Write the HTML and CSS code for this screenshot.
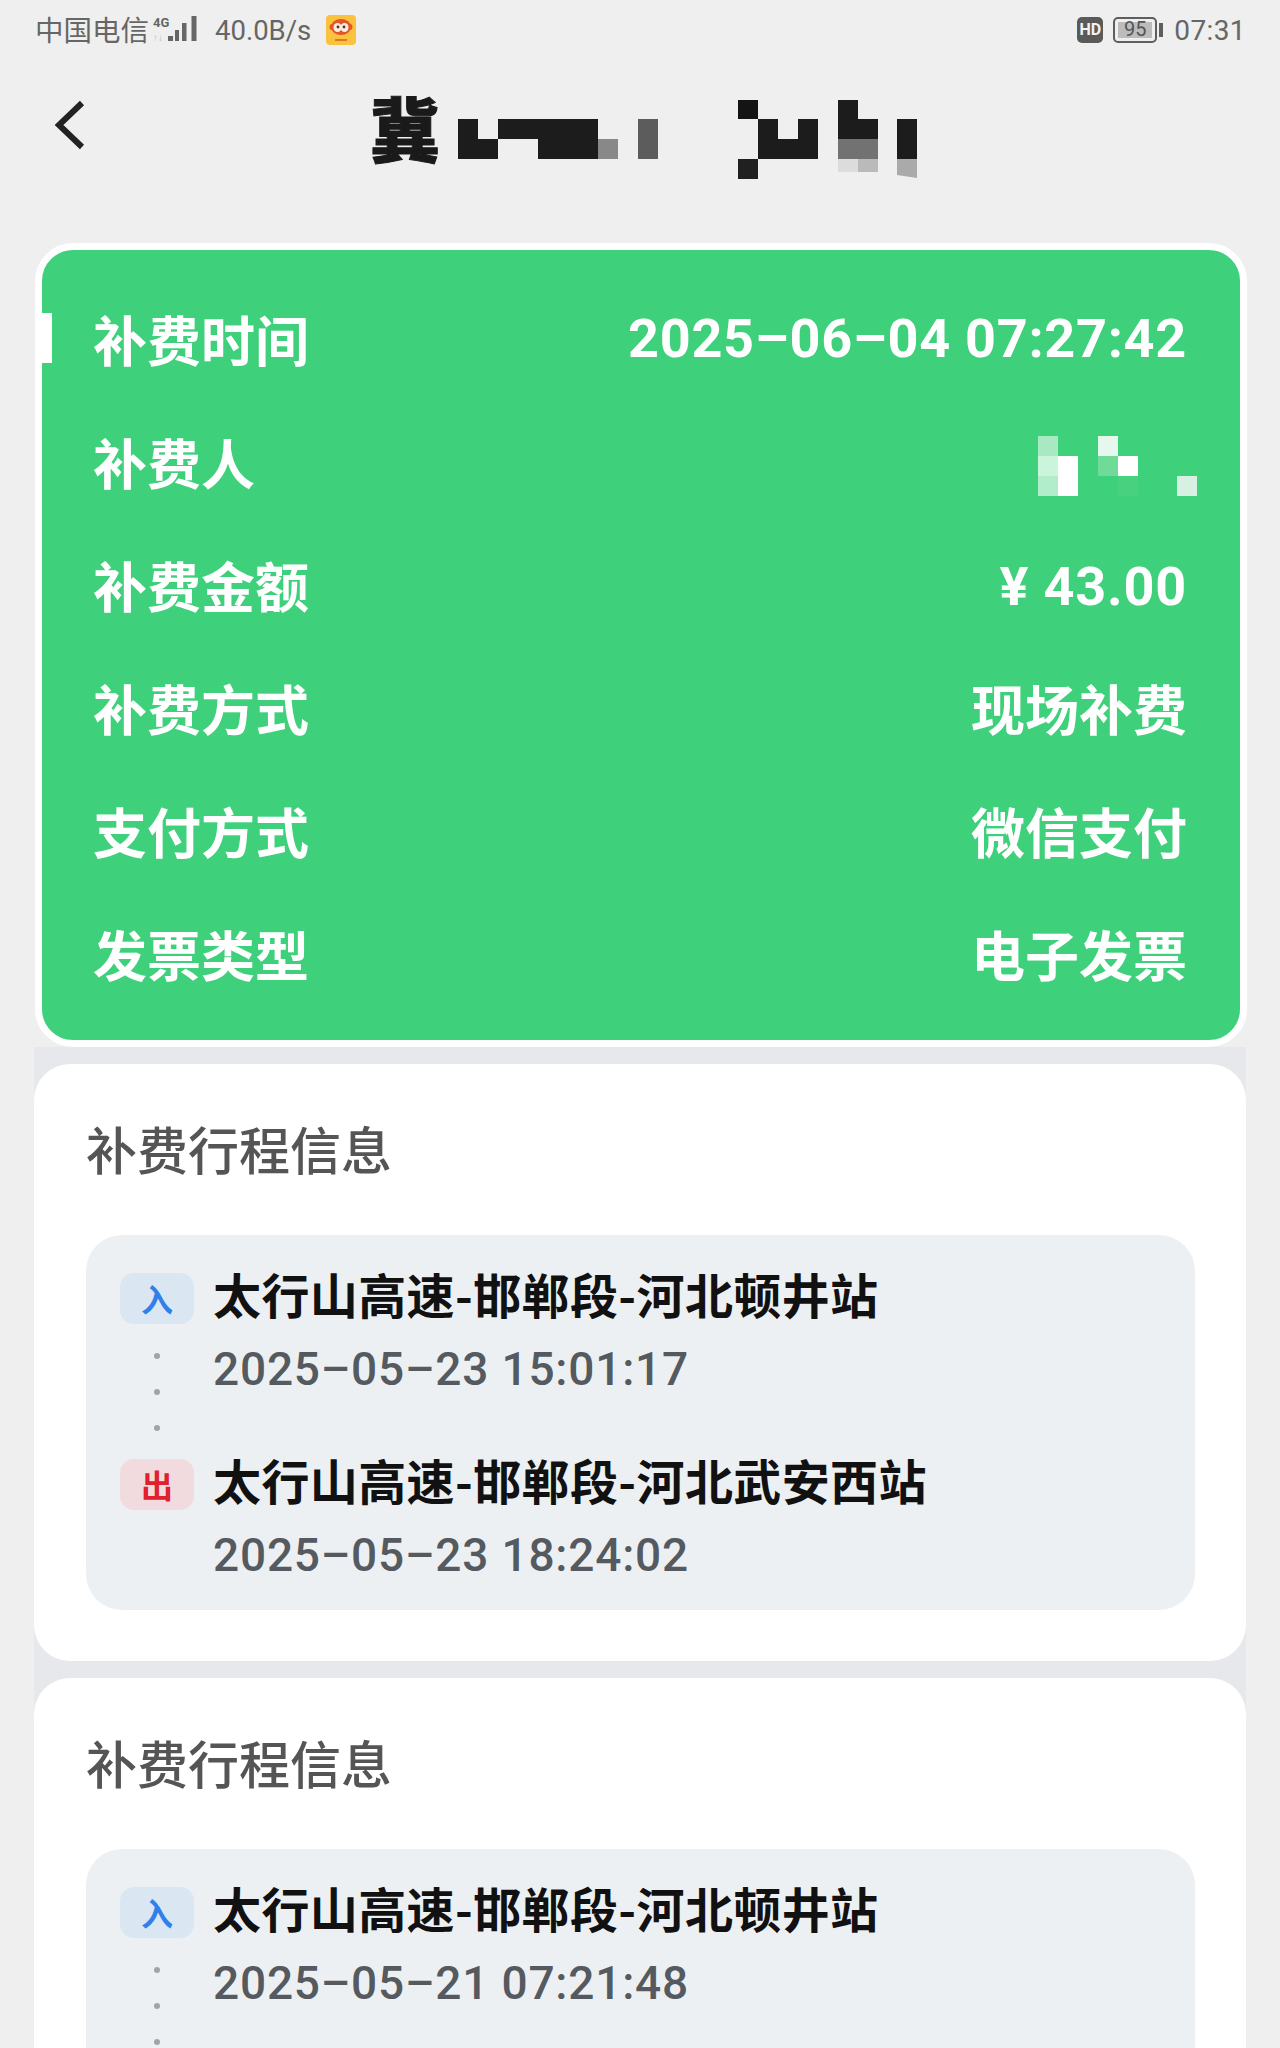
FILE: index.html
```html
<!DOCTYPE html>
<html lang="zh-CN">
<head>
<meta charset="utf-8">
<title>补费详情</title>
<link rel="stylesheet" href="styles.css">
</head>
<body>
<div class="page">
  <header class="status">
    <div class="status-left">
      <span class="carrier">中国电信</span>
      <svg class="signal" width="45" height="30" viewBox="0 0 45 30">
        <text x="1" y="12" class="sig-4g">4G</text>
        <text x="1" y="26" class="sig-arrows">↑↓</text>
        <rect x="16" y="21" width="5" height="5" fill="#666"/>
        <rect x="23" y="15" width="4" height="11" fill="#666"/>
        <rect x="30" y="8" width="4.500" height="18" fill="#666"/>
        <rect x="39.500" y="1" width="5" height="25" fill="#666"/>
      </svg>
      <span class="speed">40.0B/s</span>
      <svg class="app" width="30" height="30" viewBox="0 0 30 30">
        <rect width="30" height="30" rx="4" fill="#fbc23e"/>
        <ellipse cx="15" cy="12" rx="10" ry="8" fill="#e2562c"/>
        <ellipse cx="6" cy="12" rx="2.5" ry="3" fill="#e2562c"/>
        <ellipse cx="24" cy="12" rx="2.5" ry="3" fill="#e2562c"/>
        <ellipse cx="11.500" cy="12.500" rx="4" ry="4.500" fill="#fbeede"/>
        <ellipse cx="18.500" cy="12.500" rx="4" ry="4.500" fill="#fbeede"/>
        <circle cx="12" cy="12" r="1.400" fill="#532"/>
        <circle cx="18" cy="12" r="1.400" fill="#532"/>
        <rect x="9" y="24" width="12" height="2" fill="#d97a2a"/>
      </svg>
    </div>
    <div class="status-right">
      <span class="hd">HD</span>
      <span class="battery"><span class="battery-level">95</span></span>
      <span class="battery-tip"></span>
      <span class="clock">07:31</span>
    </div>
  </header>

  <nav class="nav">
    <svg class="back" width="40" height="60" viewBox="0 0 40 60">
      <path d="M34 5 L11 27 L34 49" fill="none" stroke="#222" stroke-width="6"/>
    </svg>
    <h1 class="plate">冀</h1>
    <svg class="plate-mask" width="460" height="80" viewBox="458 100 460 80">
      <path d="M458 119h20v20h20v20h-40z" fill="#1c1c1c"/>
      <path d="M498 119h100v40h-60v-20h-40z" fill="#1c1c1c"/>
      <rect x="598" y="139" width="20" height="20" fill="#888"/>
      <rect x="638" y="119" width="20" height="40" fill="#5c5c5c"/>
      <rect x="738" y="100" width="20" height="19" fill="#141414"/>
      <rect x="738" y="159" width="20" height="20" fill="#202020"/>
      <path d="M758 119h20v20h20v-20h20v40h-60z" fill="#1c1c1c"/>
      <path d="M838 100h20v19h20v20h-40z" fill="#1c1c1c"/>
      <rect x="838" y="139" width="40" height="20" fill="#727272"/>
      <rect x="838" y="159" width="20" height="13" fill="#dcdcdc"/>
      <rect x="858" y="159" width="20" height="13" fill="#bababa"/>
      <rect x="897" y="119" width="20" height="40" fill="#1c1c1c"/>
      <path d="M897 159h20v19l-20-3z" fill="#aaa"/>
    </svg>
  </nav>

  <section class="summary">
    <div class="summary-row"><span>补费时间</span><span class="num date">2025–06–04 07:27:42</span></div>
    <div class="summary-row"><span>补费人</span>
      <svg class="name-mask" width="159" height="60" viewBox="1037 438 159 60">
        <rect x="1037" y="438" width="20" height="20" fill="#a8e9c4"/>
        <rect x="1037" y="458" width="20" height="20" fill="#caf4dc"/>
        <rect x="1037" y="478" width="20" height="20" fill="#b2edcb"/>
        <rect x="1057" y="458" width="20" height="40" fill="#fff"/>
        <rect x="1097" y="438" width="20" height="20" fill="#e6f8ee"/>
        <rect x="1097" y="458" width="20" height="20" fill="#70da99"/>
        <rect x="1117" y="458" width="20" height="20" fill="#fff"/>
        <rect x="1117" y="478" width="20" height="20" fill="#48d280"/>
        <rect x="1176" y="478" width="20" height="20" fill="#d7f0e1"/>
      </svg>
    </div>
    <div class="summary-row"><span>补费金额</span><span class="num amount">¥ 43.00</span></div>
    <div class="summary-row"><span>补费方式</span><span>现场补费</span></div>
    <div class="summary-row"><span>支付方式</span><span>微信支付</span></div>
    <div class="summary-row"><span>发票类型</span><span>电子发票</span></div>
  </section>

  <main class="cards">
    <section class="card">
      <h2 class="card-title">补费行程信息</h2>
      <div class="trip">
        <div class="stop stop-in">
          <div class="marker">
            <span class="badge badge-in">入</span>
            <span class="dots"><i></i><i></i><i></i></span>
          </div>
          <div class="stop-text">
            <div class="station">太行山高速-邯郸段-河北顿井站</div>
            <div class="time">2025–05–23 15:01:17</div>
          </div>
        </div>
        <div class="stop">
          <div class="marker"><span class="badge badge-out">出</span></div>
          <div class="stop-text">
            <div class="station">太行山高速-邯郸段-河北武安西站</div>
            <div class="time">2025–05–23 18:24:02</div>
          </div>
        </div>
      </div>
    </section>
    <section class="card">
      <h2 class="card-title">补费行程信息</h2>
      <div class="trip">
        <div class="stop stop-in">
          <div class="marker">
            <span class="badge badge-in">入</span>
            <span class="dots"><i></i><i></i><i></i></span>
          </div>
          <div class="stop-text">
            <div class="station">太行山高速-邯郸段-河北顿井站</div>
            <div class="time">2025–05–21 07:21:48</div>
          </div>
        </div>
      </div>
    </section>
  </main>
</div>
</body>
</html>
```
FILE: styles.css
```css
* { box-sizing: border-box; }
html, body { margin: 0; padding: 0; height: 2048px; overflow: hidden; }
body {
  background: #efefef;
  font-family: "Noto Sans CJK SC", "Noto Sans", sans-serif;
}
.page { width: 1280px; height: 2048px; overflow: hidden; }

.status {
  height: 60px;
  padding: 0 34px 0 35px;
  display: flex;
  justify-content: space-between;
  align-items: center;
  color: #666;
  font-size: 28px;
}
.status-left, .status-right { display: flex; align-items: center; }
.carrier { width: 117px; font-size: 28.5px; line-height: 36px; padding-bottom: 3px; }
.sig-4g { font: 700 13px "Roboto", sans-serif; fill: #666; }
.sig-arrows { font: 700 10px "Roboto", sans-serif; fill: #bbb; }
.speed { margin-left: 18px; font-family: "Roboto", sans-serif; font-size: 27.5px; width: 111px; }
.app { display: block; }
.hd {
  width: 26px; height: 26px;
  background: #5a5a5a; color: #f2f2f2;
  border-radius: 5px;
  font: 700 16px/26px "Roboto", sans-serif;
  text-align: center;
}
.battery {
  margin-left: 10px;
  width: 44px; height: 26px;
  border: 2.5px solid #5e5e5e;
  border-radius: 5px;
  padding: 3px;
  display: flex;
}
.battery-level {
  flex: 1;
  background: #bcbcbc;
  color: #555;
  font: 400 20px/15px "Roboto", sans-serif;
  text-align: center;
}
.battery-tip { width: 4px; height: 14px; margin-left: 2px; background: #5e5e5e; }
.clock { margin-left: 11px; font-family: "Roboto", sans-serif; letter-spacing: .4px; }

.nav {
  height: 183px;
  display: flex;
  align-items: flex-start;
  padding-left: 48px;
  position: relative;
}
.back { margin-top: 38px; }
.plate {
  margin: 27px 0 0 282px;
  width: 88px;
  font-size: 70px;
  font-weight: 900;
  line-height: 80px;
  color: #1a1a1a;
  -webkit-text-stroke: 1px #1a1a1a;
}
.plate-mask { margin-top: 40px; }

.summary {
  position: relative;
  height: 804px;
  margin: 0 33px 0 35px;
  padding: 27px 53px 0 51px;
  border: 7px solid #fff;
  border-radius: 38px;
  background: #3ed07a;
  color: #fff;
  font-size: 54px;
  font-weight: 700;
}
.summary::before {
  content: "";
  position: absolute;
  left: 0; top: 63px;
  width: 10px; height: 50px;
  background: #fff;
}
.summary-row {
  height: 123px;
  display: flex;
  justify-content: space-between;
  align-items: center;
  line-height: 1;
}
.num { font-family: "Roboto", "Noto Sans CJK SC", sans-serif; font-weight: 700; font-size: 54px; letter-spacing: .8px; }
.date { letter-spacing: .7px; }
.amount { padding-top: 4px; }
.name-mask { margin: 8px -10px 0 0; }

.cards {
  margin: 0 34px;
  padding-top: 17px;
  background: #e6e8eb;
  display: flex;
  flex-direction: column;
  gap: 17px;
}
.card {
  background: #fff;
  border-radius: 36px;
  padding: 54px 51px 51px 52px;
}
.card-title {
  margin: 0 0 57px;
  font-size: 51px;
  font-weight: 500;
  line-height: 60px;
  color: #555;
}
.trip {
  background: #edf0f3;
  border-radius: 36px;
  padding: 38px 34px 30px;
}
.stop { display: flex; gap: 19px; }
.stop-in { height: 186px; }
.marker { width: 74px; display: flex; flex-direction: column; align-items: center; }
.badge {
  width: 74px; height: 51px;
  border-radius: 14px;
  font-size: 32px;
  font-weight: 700;
  line-height: 51px;
  text-align: center;
}
.badge-in { background: #dbe6f3; color: #2f80ea; }
.badge-out { background: #f1dbdf; color: #e0202f; }
.dots { margin-top: 29px; display: flex; flex-direction: column; gap: 30px; }
.dots i { display: block; width: 6px; height: 6px; border-radius: 50%; background: #a0a3a8; }
.station {
  height: 51px;
  font-size: 48px;
  font-weight: 700;
  line-height: 41px;
  letter-spacing: .4px;
  color: #111;
  white-space: nowrap;
}
.time {
  margin-top: 20px;
  height: 50px;
  font-family: "Roboto", sans-serif;
  font-size: 46px;
  font-weight: 500;
  line-height: 50px;
  color: #555a60;
  letter-spacing: .8px;
}
```
